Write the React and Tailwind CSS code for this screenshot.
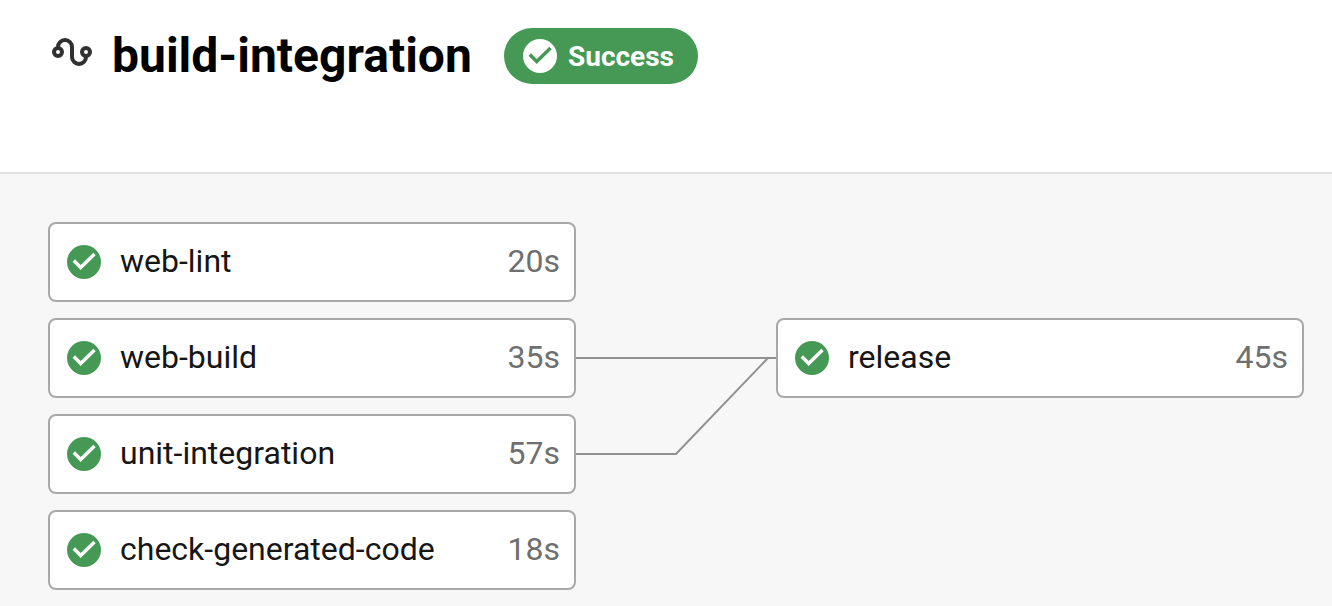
function CheckCircle({ className, checkClassName }) {
  return (
    <svg viewBox="-17 -17 34 34" className={`size-[34px] shrink-0 ${className}`}>
      <circle r="17" fill="currentColor" />
      <path d="M-10.2 -1.5L-3.3 5.5L10.5 -8" fill="none" strokeWidth="3.4" className={checkClassName} />
    </svg>
  );
}

function PipelineIcon() {
  return (
    <svg viewBox="0 0 40 28" className="mb-2 h-7 w-10 shrink-0" fill="none" stroke="#303030" strokeWidth="4">
      <circle cx="6" cy="14" r="4" />
      <circle cx="34" cy="14" r="4" />
      <path d="M6 10V9a7 7 0 0 1 14 0V19a7 7 0 0 0 14 0V18" />
    </svg>
  );
}

function Job({ name, duration }) {
  return (
    <div className="flex h-20 w-[528px] items-center rounded-lg border-2 border-[#a8a8a8] bg-white pr-3.5 pl-[17px] text-[32px] leading-10">
      <CheckCircle className="text-[#459955]" checkClassName="stroke-white" />
      <span className="mb-0.5 ml-[19px] text-[#161616]">{name}</span>
      <span className="mb-0.5 ml-auto text-[#6f6f6f]">{duration}</span>
    </div>
  );
}

const jobs = [
  { name: "web-lint", duration: "20s" },
  { name: "web-build", duration: "35s" },
  { name: "unit-integration", duration: "57s" },
  { name: "check-generated-code", duration: "18s" },
];

export default function App() {
  return (
    <div className="flex h-[606px] w-[1332px] flex-col overflow-hidden bg-white font-['Roboto',sans-serif]">
      <header className="flex h-[174px] shrink-0 items-start border-b-2 border-[#e0e0e0] pt-7 pl-[52px]">
        <div className="flex h-14 items-center">
          <PipelineIcon />
          <h1 className="ml-5 w-[392px] text-[48px] leading-14 font-bold text-black">build-integration</h1>
          <div className="flex h-14 w-[194px] items-center rounded-full bg-[#459955] pl-[19px] text-white">
            <CheckCircle className="text-white" checkClassName="stroke-[#459955]" />
            <span className="mt-0.5 ml-[11px] text-[28px] leading-8 font-bold">Success</span>
          </div>
        </div>
      </header>
      <main className="flex flex-1 items-start bg-[#f7f7f7] pt-12 pl-12">
        <div className="flex flex-col gap-4">
          {jobs.map((job) => (
            <Job key={job.name} {...job} />
          ))}
        </div>
        <svg viewBox="0 0 200 368" className="h-[368px] w-[200px] shrink-0" fill="none" stroke="#919191" strokeWidth="2">
          <path d="M0 136H200" />
          <path d="M0 232H100L192 136" />
        </svg>
        <div className="pt-24">
          <Job name="release" duration="45s" />
        </div>
      </main>
    </div>
  );
}
